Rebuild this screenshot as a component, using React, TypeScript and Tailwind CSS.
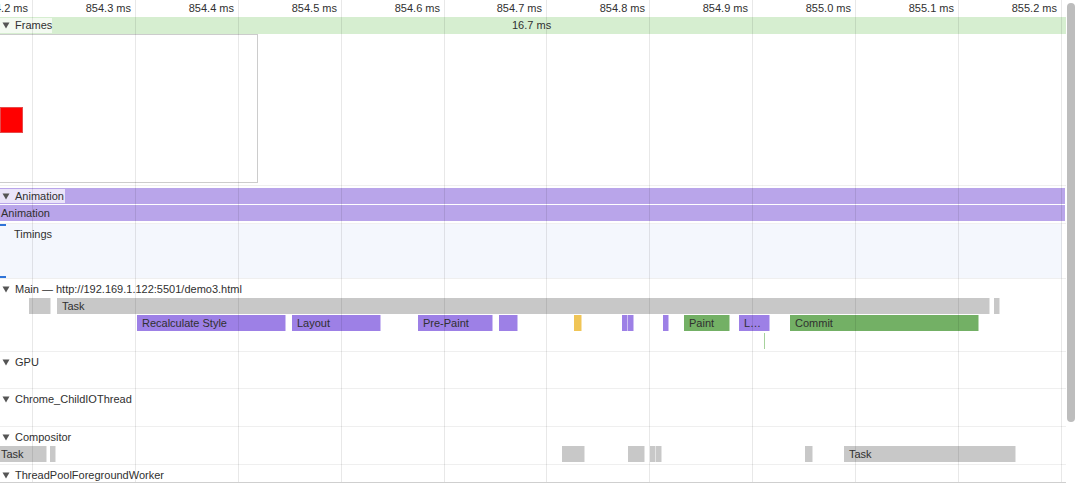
import type { ReactNode } from 'react';

type Bar = {
  from: number;
  to: number;
  label?: string;
  color: string;
};

const GRID = [32, 135, 238, 341, 444, 546, 649, 752, 855, 958, 1061];
const TICKS = [
  '854.2 ms',
  '854.3 ms',
  '854.4 ms',
  '854.5 ms',
  '854.6 ms',
  '854.7 ms',
  '854.8 ms',
  '854.9 ms',
  '855.0 ms',
  '855.1 ms',
  '855.2 ms',
];

const TASK = 'bg-[#c8c8c8]';
const RENDER = 'bg-[#9d80e6]';
const PAINT = 'bg-[#73b065]';
const SCRIPT = 'bg-[#f0c556]';

const mainRows: Bar[][] = [
  [
    { from: 29, to: 51, color: TASK },
    { from: 57, to: 990, label: 'Task', color: TASK },
    { from: 994, to: 997, color: TASK },
  ],
  [
    { from: 137, to: 286, label: 'Recalculate Style', color: RENDER },
    { from: 292, to: 381, label: 'Layout', color: RENDER },
    { from: 418, to: 493, label: 'Pre-Paint', color: RENDER },
    { from: 499, to: 518, color: RENDER },
    { from: 574, to: 582, color: SCRIPT },
    { from: 622, to: 626, color: RENDER },
    { from: 628, to: 630, color: RENDER },
    { from: 663, to: 667, color: RENDER },
    { from: 684, to: 730, label: 'Paint', color: PAINT },
    { from: 739, to: 770, label: 'L…', color: RENDER },
    { from: 790, to: 979, label: 'Commit', color: PAINT },
  ],
];

const compositorRow: Bar[] = [
  { from: -4, to: 47, label: 'Task', color: TASK },
  { from: 50, to: 53, color: TASK },
  { from: 562, to: 585, color: TASK },
  { from: 628, to: 645, color: TASK },
  { from: 650, to: 654, color: TASK },
  { from: 656, to: 660, color: TASK },
  { from: 805, to: 813, color: TASK },
  { from: 844, to: 1016, label: 'Task', color: TASK },
];

const Arrow = () => (
  <svg width="8" height="7" viewBox="0 0 8 7" className="shrink-0">
    <path d="M0.5 0.5 H7.5 L4 6.5 Z" fill="#555" />
  </svg>
);

const BarRow = ({ bars }: { bars: Bar[] }) => (
  <div className="relative h-[17px]">
    {bars.map((b, i) => (
      <div
        key={i}
        className={`absolute top-0 h-[16px] ${b.color} border-r border-white/50 overflow-hidden whitespace-nowrap pl-[5px] leading-[16px] text-[#303030]`}
        style={{ left: b.from, width: b.to - b.from }}
      >
        {b.label}
      </div>
    ))}
  </div>
);

const Track = ({
  title,
  height,
  children,
}: {
  title: string;
  height: string;
  children?: ReactNode;
}) => (
  <div className={`${height} border-t border-[#efefef] flex flex-col`}>
    <div className="h-[19px] shrink-0 flex items-center gap-[5px] pl-[2px] pt-[2px]">
      <Arrow />
      <span>{title}</span>
    </div>
    {children}
  </div>
);

const App = () => {
  return (
    <div className="relative w-[1076px] h-[484px] overflow-hidden bg-white font-['Liberation_Sans',Arial,sans-serif] text-[11px] text-[#303030] flex">
      <div className="w-[1066px] h-[483px] flex flex-col border-b border-[#cfcfcf]">
        {/* ruler */}
        <div className="relative h-[17px] shrink-0">
          {TICKS.map((t, i) => (
            <span
              key={t}
              className="absolute top-0 leading-[17px] whitespace-nowrap text-right w-[80px]"
              style={{ left: GRID[i] - 84 }}
            >
              {t}
            </span>
          ))}
        </div>

        {/* frames */}
        <div className="relative h-[17px] shrink-0 bg-[#d6eed0]">
          <div className="absolute left-0 top-[1px] h-[15px] w-[52px] bg-white/70 flex items-center gap-[5px] pl-[2px]">
            <Arrow />
            <span>Frames</span>
          </div>
          <span className="absolute left-[512px] top-0 leading-[17px]">16.7 ms</span>
        </div>
        <div className="h-[152px] shrink-0 border-b border-[#efefef]">
          <div className="w-[258px] h-[149px] border border-l-0 border-[#cccccc] pt-[72px]">
            <div className="w-[23px] h-[26px] bg-[#ff0000] border border-[#e64a4a]" />
          </div>
        </div>

        {/* animation */}
        <div className="h-[2px] shrink-0" />
        <div className="relative h-[16px] shrink-0 bg-[#b9a5ea] mr-[1px]">
          <div className="absolute left-0 top-[1px] h-[14px] w-[65px] bg-white/70 flex items-center gap-[5px] pl-[2px]">
            <Arrow />
            <span>Animation</span>
          </div>
        </div>
        <div className="h-[1px] shrink-0 bg-white" />
        <div className="h-[16px] shrink-0 bg-[#b9a5ea] mr-[1px] leading-[16px] pl-[1px]">Animation</div>
        <div className="h-[3px] shrink-0 border-b border-[#f0f0f0]" />

        {/* timings */}
        <div className="relative h-[54px] shrink-0 bg-[#f4f7fd] mr-[4px]">
          <div className="absolute left-0 top-0 w-[6px] h-[2px] bg-[#2f74d8]" />
          <div className="absolute left-0 bottom-0 w-[6px] h-[2px] bg-[#2f74d8]" />
          <span className="absolute left-[14px] top-[3px] leading-[14px]">Timings</span>
        </div>

        {/* threads */}
        <Track title="Main — http://192.169.1.122:5501/demo3.html" height="h-[73px]">
          <BarRow bars={mainRows[0]} />
          <BarRow bars={mainRows[1]} />
          <div className="relative h-[17px]">
            <div className="absolute left-[764px] top-[1px] w-[1px] h-[16px] bg-[#a6d29c]" />
          </div>
        </Track>
        <Track title="GPU" height="h-[37px]" />
        <Track title="Chrome_ChildIOThread" height="h-[38px]" />
        <Track title="Compositor" height="h-[38px]">
          <BarRow bars={compositorRow} />
        </Track>
        <Track title="ThreadPoolForegroundWorker" height="h-[18px]" />
      </div>

      {/* scrollbar */}
      <div className="w-[10px] h-[484px] pt-[3px] pl-[1px]">
        <div className="w-[8px] h-[419px] rounded-full bg-[#bdbdbd]" />
      </div>

      {/* grid */}
      <div className="pointer-events-none absolute left-0 top-0 h-[482px] w-[1066px]">
        {GRID.map((x) => (
          <div key={x} className="absolute top-0 h-full w-[1px] bg-black/[0.09]" style={{ left: x }} />
        ))}
      </div>
    </div>
  );
};

export default App;
